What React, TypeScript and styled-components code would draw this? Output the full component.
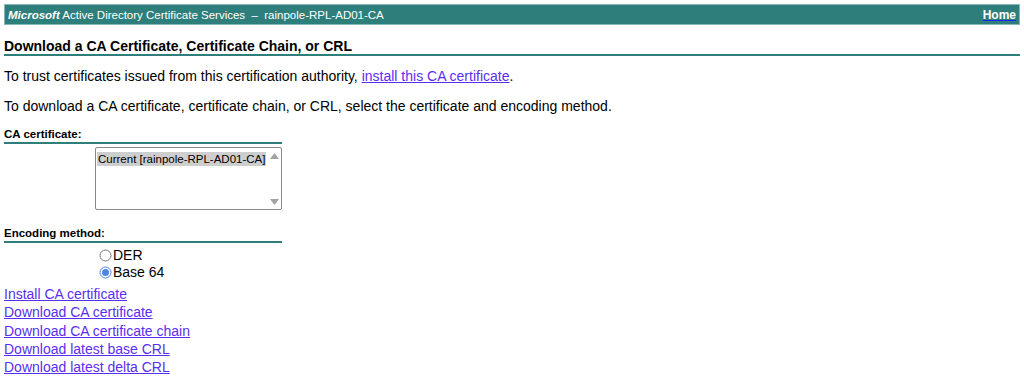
import React, { useState } from 'react';
import styled, { createGlobalStyle } from 'styled-components';

const GlobalStyle = createGlobalStyle`
  body {
    margin: 0;
    background: #ffffff;
    font-family: "Liberation Sans", Arial, sans-serif;
    color: #000000;
  }
`;

const Page = styled.div`
  padding: 4px 4px 0 4px;
`;

const HeaderBar = styled.div`
  display: flex;
  justify-content: space-between;
  align-items: center;
  height: 19px;
  padding: 0 3px;
  background: #2e7f7c;
  border: 1px solid #86b8b5;
  color: #ffffff;
  font-size: 11.5px;
`;

const Brand = styled.span`
  b {
    font-style: italic;
    font-weight: bold;
  }
`;

const HomeLink = styled.a`
  color: #ffffff;
  font-size: 12px;
  font-weight: bold;
  text-decoration: underline;
  text-decoration-color: #2020ff;
  cursor: pointer;
`;

const Title = styled.h1`
  margin: 13px 0 0 0;
  padding: 0;
  font-size: 14px;
  line-height: 16px;
  font-weight: bold;
  border-bottom: 2px solid #2e7f7c;
`;

const Para = styled.p`
  margin: 12px 0 0 0;
  font-size: 14px;
  line-height: 16px;
  & + & {
    margin-top: 14px;
  }
`;

const TextLink = styled.a`
  color: #5a2ef0;
  text-decoration: underline;
  cursor: pointer;
`;

const Section = styled.div<{ $top: number }>`
  width: 278px;
  margin-top: ${(p) => p.$top}px;
`;

const SectionLabel = styled.div`
  font-size: 11.5px;
  line-height: 13px;
  font-weight: bold;
  padding-bottom: 1px;
  border-bottom: 2px solid #2e7f7c;
`;

const ListBox = styled.div`
  display: flex;
  margin: 3px 0 0 91px;
  width: 185px;
  height: 61px;
  border: 1px solid #8a8a8a;
  border-radius: 2px;
  background: #ffffff;
`;

const Options = styled.div`
  flex: 1;
  padding: 1px 1px;
`;

const Option = styled.div<{ $selected: boolean }>`
  display: inline-block;
  font-size: 11.5px;
  line-height: 14px;
  padding: 0 1px;
  background: ${(p) => (p.$selected ? '#cecece' : 'transparent')};
  white-space: nowrap;
`;

const ScrollTrack = styled.div`
  display: flex;
  flex-direction: column;
  justify-content: space-between;
  align-items: center;
  width: 14px;
  padding: 5px 0 4px 0;
`;

const RadioGroup = styled.div`
  display: flex;
  flex-direction: column;
  margin: 4px 0 0 95px;
`;

const RadioRow = styled.label`
  display: flex;
  align-items: center;
  gap: 1px;
  font-size: 14px;
  line-height: 17px;
`;

const Links = styled.div`
  display: flex;
  flex-direction: column;
  margin-top: 4px;
  font-size: 14px;
  line-height: 18.25px;
`;

const Arrow = ({ up }: { up: boolean }) => (
  <svg width="9" height="6" viewBox="0 0 9 6">
    <path d={up ? 'M0 6 L4.5 0 L9 6 Z' : 'M0 0 L4.5 6 L9 0 Z'} fill="#a3a3a3" />
  </svg>
);

const Radio = ({ checked }: { checked: boolean }) => (
  <svg width="13" height="13" viewBox="0 0 13 13">
    <circle cx="6.5" cy="6.5" r="5.5" fill="#ffffff" stroke={checked ? '#4a86e8' : '#767676'} strokeWidth="1" />
    {checked && <circle cx="6.5" cy="6.5" r="3.5" fill="#4a86e8" />}
  </svg>
);

export default function App() {
  const [encoding, setEncoding] = useState<'der' | 'b64'>('b64');

  return (
    <Page>
      <GlobalStyle />
      <HeaderBar>
        <Brand>
          <b>Microsoft</b> Active Directory Certificate Services &nbsp;&ndash;&nbsp; rainpole-RPL-AD01-CA
        </Brand>
        <HomeLink>Home</HomeLink>
      </HeaderBar>

      <Title>Download a CA Certificate, Certificate Chain, or CRL</Title>

      <Para>
        To trust certificates issued from this certification authority,{' '}
        <TextLink>install this CA certificate</TextLink>.
      </Para>
      <Para>
        To download a CA certificate, certificate chain, or CRL, select the certificate and encoding
        method.
      </Para>

      <Section $top={14}>
        <SectionLabel>CA certificate:</SectionLabel>
      </Section>
      <ListBox>
        <Options>
          <Option $selected>Current [rainpole-RPL-AD01-CA]</Option>
        </Options>
        <ScrollTrack>
          <Arrow up />
          <Arrow up={false} />
        </ScrollTrack>
      </ListBox>

      <Section $top={17}>
        <SectionLabel>Encoding method:</SectionLabel>
      </Section>
      <RadioGroup>
        <RadioRow onClick={() => setEncoding('der')}>
          <Radio checked={encoding === 'der'} />
          DER
        </RadioRow>
        <RadioRow onClick={() => setEncoding('b64')}>
          <Radio checked={encoding === 'b64'} />
          Base 64
        </RadioRow>
      </RadioGroup>

      <Links>
        <TextLink>Install CA certificate</TextLink>
        <TextLink>Download CA certificate</TextLink>
        <TextLink>Download CA certificate chain</TextLink>
        <TextLink>Download latest base CRL</TextLink>
        <TextLink>Download latest delta CRL</TextLink>
      </Links>
    </Page>
  );
}
